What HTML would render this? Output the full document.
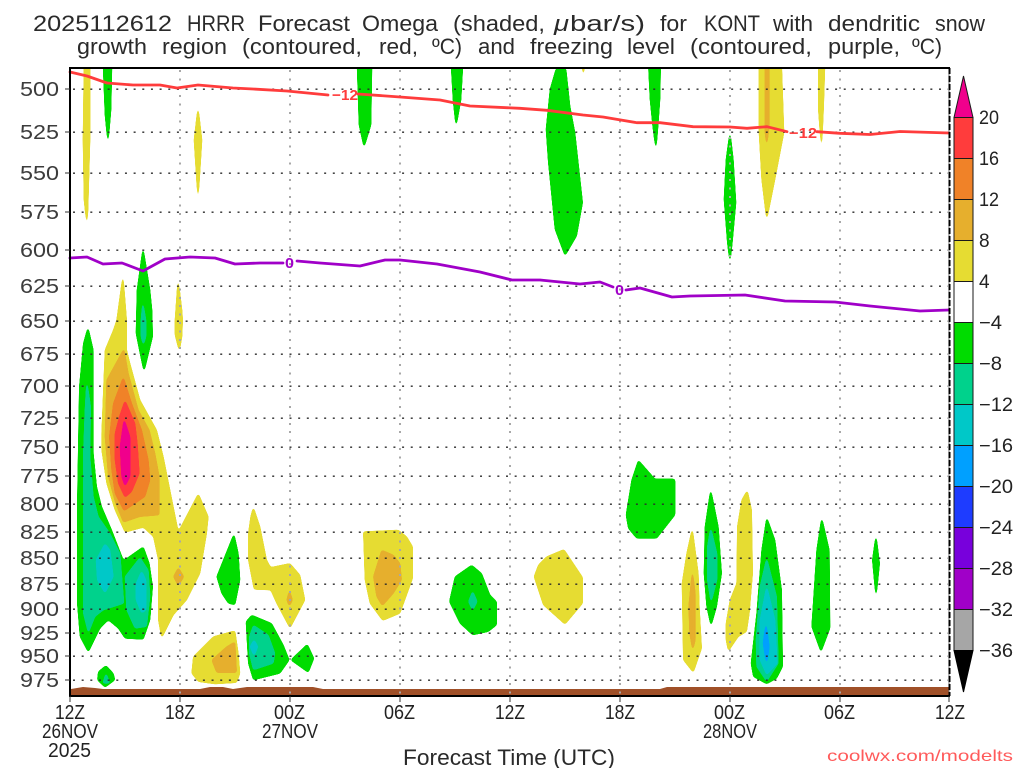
<!DOCTYPE html>
<html><head><meta charset="utf-8"><title>HRRR Forecast Omega</title>
<style>
html,body{margin:0;padding:0;background:#fff;width:1024px;height:768px;overflow:hidden}
svg{display:block}
text{font-family:"Liberation Sans",sans-serif;fill:#2a2a2a}
.t{font-size:22px}
.a{font-size:20px;fill:#3c3c3c}
.c{font-size:19px;fill:#222}
.x{font-size:20px;fill:#222}
.s1 polygon{filter:url(#s1)}
.s3 polygon{filter:url(#s3)}
.y{fill:#e6dc32}.o{fill:#e6af2d}.n{fill:#f08228}.r{fill:#ff3c3c}.m{fill:#f0008c}.g{fill:#00dc00}.e{fill:#00d28c}.q{fill:#00c8c8}.b{fill:#00a0ff}
</style></head><body>
<svg width="1024" height="768" viewBox="0 0 1024 768" xmlns="http://www.w3.org/2000/svg">
<defs>
<filter id="s1" x="-60%" y="-30%" width="220%" height="160%" color-interpolation-filters="sRGB">
<feGaussianBlur stdDeviation="1.2"/>
<feComponentTransfer><feFuncA type="linear" slope="14" intercept="-5"/></feComponentTransfer>
</filter>
<filter id="s3" x="-60%" y="-30%" width="220%" height="160%" color-interpolation-filters="sRGB">
<feGaussianBlur stdDeviation="3.6"/>
<feComponentTransfer><feFuncA type="linear" slope="14" intercept="-5"/></feComponentTransfer>
</filter>
</defs>
<rect width="1024" height="768" fill="#fff"/>

<!-- title -->
<g>
<text x="33" y="31" textLength="139" lengthAdjust="spacingAndGlyphs" class="t">2025112612</text>
<text x="187" y="31" textLength="58" lengthAdjust="spacingAndGlyphs" class="t">HRRR</text>
<text x="258" y="31" textLength="92" lengthAdjust="spacingAndGlyphs" class="t">Forecast</text>
<text x="362" y="31" textLength="76" lengthAdjust="spacingAndGlyphs" class="t">Omega</text>
<text x="453" y="31" textLength="92" lengthAdjust="spacingAndGlyphs" class="t">(shaded,</text>
<text x="554" y="31" textLength="15" lengthAdjust="spacingAndGlyphs" class="t" font-style="italic">μ</text>
<text x="570" y="31" textLength="75" lengthAdjust="spacingAndGlyphs" class="t">bar/s)</text>
<text x="660" y="31" textLength="27" lengthAdjust="spacingAndGlyphs" class="t">for</text>
<text x="704" y="31" textLength="56" lengthAdjust="spacingAndGlyphs" class="t">KONT</text>
<text x="773" y="31" textLength="40" lengthAdjust="spacingAndGlyphs" class="t">with</text>
<text x="828" y="31" textLength="92" lengthAdjust="spacingAndGlyphs" class="t">dendritic</text>
<text x="935" y="31" textLength="50" lengthAdjust="spacingAndGlyphs" class="t">snow</text>
<text x="77" y="54" textLength="70" lengthAdjust="spacingAndGlyphs" class="t">growth</text>
<text x="162" y="54" textLength="65" lengthAdjust="spacingAndGlyphs" class="t">region</text>
<text x="242" y="54" textLength="120" lengthAdjust="spacingAndGlyphs" class="t">(contoured,</text>
<text x="379" y="54" textLength="39" lengthAdjust="spacingAndGlyphs" class="t">red,</text>
<text x="432" y="54" textLength="30" lengthAdjust="spacingAndGlyphs" class="t">ºC)</text>
<text x="478" y="54" textLength="37" lengthAdjust="spacingAndGlyphs" class="t">and</text>
<text x="530" y="54" textLength="83" lengthAdjust="spacingAndGlyphs" class="t">freezing</text>
<text x="627" y="54" textLength="48" lengthAdjust="spacingAndGlyphs" class="t">level</text>
<text x="690" y="54" textLength="122" lengthAdjust="spacingAndGlyphs" class="t">(contoured,</text>
<text x="828" y="54" textLength="72" lengthAdjust="spacingAndGlyphs" class="t">purple,</text>
<text x="912" y="54" textLength="30" lengthAdjust="spacingAndGlyphs" class="t">ºC)</text>
</g>

<!-- shaded fields -->
<g>
<g class="s3" transform="translate(60,320) scale(.33333)">
<polygon class="g" points="84,20 100,90 100,400 110,500 125,560 155,630 190,720 200,715 250,680 268,730 278,800 270,900 250,958 195,955 175,925 145,900 120,925 85,997 60,950 52,850 52,550 58,200 70,70"/>
<polygon class="e" points="80,175 92,260 90,410 100,530 115,590 150,640 180,700 192,850 130,870 105,890 85,940 70,880 70,400 75,270"/>
<polygon class="e" points="240,712 265,750 270,830 260,920 225,925 200,870 195,770"/>
<polygon class="q" points="135,670 150,690 160,770 135,820 112,780 108,720"/>
<polygon class="q" points="245,752 258,780 258,870 245,880 228,840 228,790"/>
<polygon class="y" points="189,-140 200,0 200,90 210,130 240,240 265,285 290,330 310,410 330,510 355,635 415,520 445,590 440,640 420,760 380,840 340,885 305,955 295,900 295,720 280,650 250,622 195,637 165,570 140,490 125,390 125,340 135,90 160,30 170,0"/>
<polygon class="o" points="192,85 205,160 235,270 268,330 285,400 298,470 298,585 240,590 190,607 165,545 145,470 135,350 140,180"/>
<polygon class="n" points="190,170 215,250 245,330 265,420 270,480 255,530 192,573 165,520 155,450 148,350 160,250"/>
<polygon class="r" points="195,240 225,310 232,370 238,460 215,515 195,533 175,490 165,420 165,340 178,290"/>
<polygon class="m" points="192,295 210,350 210,470 195,500 185,470 180,380"/>
<polygon class="o" points="355,742 372,770 355,798 340,770"/>
<polygon class="g" points="249,-220 270,-90 276,-30 278,50 252,157 240,100 228,40 231,-90"/>
<polygon class="e" points="248,-60 258,0 258,50 250,78 243,50 243,0"/>
<polygon class="y" points="354,-130 366,-30 368,0 366,50 358,96 345,45 345,0"/>
<polygon class="g" points="522,640 535,700 540,780 525,855 505,850 485,820 470,770 490,720"/>
<polygon class="y" points="580,560 600,620 620,720 632,742 690,730 720,765 735,840 690,925 650,850 632,810 582,808 565,720 565,640 572,590"/>
<polygon class="o" points="688,810 698,840 688,860 680,840"/>
<polygon class="y" points="525,932 535,1000 540,1060 530,1088 465,1092 415,1085 395,1060 400,1010 460,950"/>
<polygon class="o" points="525,965 530,1058 470,1058 455,1020 500,980"/>
<polygon class="g" points="575,885 635,910 670,975 688,1020 660,1060 580,1080 565,1030 558,905"/>
<polygon class="e" points="580,915 625,945 645,1000 640,1030 580,1050 568,1000 568,950"/>
<polygon class="q" points="582,958 594,980 582,1009 570,980"/>
<polygon class="g" points="742,972 762,1015 745,1058 692,1020"/>
<polygon class="g" points="138,1036 160,1060 165,1080 135,1102 112,1080 115,1055"/>
<polygon class="e" points="138,1058 150,1090 128,1090"/>
</g>
<g class="s3" transform="translate(350,500) scale(.33333)">
<polygon class="y" points="40,95 145,90 170,110 188,140 188,235 150,340 98,362 60,310 45,240"/>
<polygon class="o" points="95,150 130,165 150,190 155,240 130,280 97,318 80,290 70,230"/>
<polygon class="g" points="365,195 395,220 420,285 440,305 440,375 415,395 368,405 330,370 298,305 315,230"/>
<polygon class="e" points="368,272 382,305 368,332 355,305"/>
<polygon class="y" points="642,148 698,232 698,310 645,373 580,315 552,230 565,195 590,170"/>
</g>
<g class="s3" transform="translate(620,440) scale(.33333)">
<polygon class="g" points="55,60 105,117 165,117 165,225 110,295 50,295 25,265 18,225 35,120"/>
<polygon class="y" points="217,262 235,400 238,500 245,625 220,698 190,660 186,430 200,340"/>
<polygon class="o" points="217,385 226,460 226,600 218,634 209,580 206,500"/>
<polygon class="g" points="272,145 295,260 305,400 290,500 273,560 260,500 252,400 255,260"/>
<polygon class="e" points="272,260 291,340 291,420 273,490 262,420 262,320"/>
<polygon class="y" points="382,150 395,210 398,400 388,520 380,575 355,590 325,634 318,600 318,550 330,480 350,430 352,260 365,180"/>
<polygon class="g" points="440,230 465,300 485,450 488,680 470,715 440,732 400,710 393,670 410,520 425,330"/>
<polygon class="e" points="440,352 470,470 475,670 440,725 410,680 408,600 420,440"/>
<polygon class="q" points="440,436 465,540 472,670 440,705 420,660 420,540"/>
<polygon class="b" points="438,544 448,620 440,676 429,610"/>
<polygon class="g" points="605,230 628,330 630,565 603,637 575,560 590,330"/>
<polygon class="g" points="768,280 779,370 768,480 757,360"/>
</g>
<g class="s3" transform="translate(520,66) scale(.33333)">
<polygon class="g" points="108,8 138,8 150,120 165,200 188,410 170,510 135,570 105,490 85,290 78,190 90,70"/>
<polygon class="y" points="185,-4 195,-4 190,34"/>
<polygon class="g" points="385,-4 422,-4 420,100 415,170 408,258 398,180 390,100"/>
<polygon class="g" points="630,192 640,280 648,410 638,520 630,596 622,530 612,400 618,280"/>
<polygon class="y" points="717,-4 785,-4 792,200 765,340 740,465 725,340 717,200"/>
<polygon class="o" points="735,-4 748,-4 748,180 740,246 735,200"/>
<polygon class="y" points="895,-4 915,-4 911,120 905,260 900,200 895,130"/>
</g>
<g class="s1">
<polygon class="g" points="357,64 372,64 371,125 364,148 359,125"/>
<polygon class="g" points="451,64 463,64 461,100 456,128 453,100"/>
<polygon class="y" points="84,64 90,64 90,140 88,210 87,228 84,200 83,140"/>
<polygon class="g" points="103,64 112,64 111,110 108,146 105,115"/>
<polygon class="y" points="198,105 202,140 198,204 194,140"/>
</g>
<rect x="71" y="60" width="880" height="8" fill="#fff"/>
<!-- terrain -->
<polygon fill="#a05028" points="71,695 71,689 83,687 95,688 103,689 200,689 210,687 223,687 233,689 247,687 313,687 323,689 660,689 667,687 949,687 949,695"/>
</g>

<!-- grid -->
<g fill="none" stroke="#2a2a2a" stroke-width="1.4" stroke-dasharray="2 6.66" stroke-dashoffset="-1" transform="translate(0,.2)">
<path d="M72 89H948M72 132H948M72 173H948M72 212H948M72 250H948M72 286H948M72 321H948M72 354H948M72 386H948M72 418H948M72 447H948M72 476H948M72 504H948M72 532H948M72 558H948M72 584H948M72 609H948M72 633H948M72 656H948M72 680H948"/>
</g>
<g fill="none" stroke="#a8a8a8" stroke-width="1.6" stroke-dasharray="2 6.4" shape-rendering="crispEdges">
<path d="M180 70V695M290 70V695M400 70V695M510 70V695M620 70V695M730 70V695M840 70V695"/>
</g>

<!-- contour lines -->
<g fill="none" stroke-width="2.8" stroke-linejoin="round" stroke-linecap="round">
<path stroke="#ff3c3c" d="M70 72L87 76L107 83L133 85L160 85L177 88L198 85L233 88L253 89L287 91L328 95"/>
<path stroke="#ff3c3c" d="M358 94L400 97L440 100L470 106L520 108.3L547 110.3L583 115L603 117L637 122.7L660 122.7L693 126.7L730 127L747 128.3L767 126.7L787 131.7"/>
<path stroke="#ff3c3c" d="M817 131.7L840 133.3L870 134.5L900 131.5L949 133"/>
<path stroke="#a000c8" d="M70 258L87 257L103 264L122 263L143 271L165 259L190 257L215 258L235 264L260 263L283 263"/>
<path stroke="#a000c8" d="M297 261L320 263L360 266L385 260L400 260L437 264L480 272L512 280L540 280L580 284L600 282L613 287"/>
<path stroke="#a000c8" d="M626 290L640 288L672 297L690 296L745 295L785 301L835 302L870 306L920 311L949 310"/>
</g>
<text x="332" y="100" font-size="15" font-weight="bold" textLength="26" lengthAdjust="spacingAndGlyphs" style="fill:#ff3c3c">−12</text>
<text x="789" y="138" font-size="15" font-weight="bold" textLength="28" lengthAdjust="spacingAndGlyphs" style="fill:#ff3c3c">−12</text>
<text x="285" y="268" font-size="15" font-weight="bold" textLength="9" lengthAdjust="spacingAndGlyphs" style="fill:#a000c8">0</text>
<text x="615" y="295" font-size="15" font-weight="bold" textLength="9" lengthAdjust="spacingAndGlyphs" style="fill:#a000c8">0</text>

<!-- frame -->
<g fill="none" stroke="#000" shape-rendering="crispEdges">
<path stroke-width="2" d="M70 68H950M70 696H950"/>
<path stroke-width="2" d="M70 67V697"/>
<path stroke-width="1" stroke="#666" d="M949 68V696"/>
<path stroke-width="2" stroke-dasharray="6 2" d="M949.5 68V696"/>
<path stroke="#333" stroke-width="1" d="M65 89H70M65 132H70M65 173H70M65 212H70M65 250H70M65 286H70M65 321H70M65 354H70M65 386H70M65 418H70M65 447H70M65 476H70M65 504H70M65 532H70M65 558H70M65 584H70M65 609H70M65 633H70M65 656H70M65 680H70"/>
<path stroke="#333" stroke-width="1" d="M70 696V702M180 696V702M290 696V702M400 696V702M510 696V702M620 696V702M730 696V702M840 696V702M949 696V702"/>
</g>

<!-- y labels -->
<g>
<text class="a" x="20" y="96" textLength="39" lengthAdjust="spacingAndGlyphs">500</text>
<text class="a" x="20" y="139" textLength="39" lengthAdjust="spacingAndGlyphs">525</text>
<text class="a" x="20" y="180" textLength="39" lengthAdjust="spacingAndGlyphs">550</text>
<text class="a" x="20" y="219" textLength="39" lengthAdjust="spacingAndGlyphs">575</text>
<text class="a" x="20" y="257" textLength="39" lengthAdjust="spacingAndGlyphs">600</text>
<text class="a" x="20" y="293" textLength="39" lengthAdjust="spacingAndGlyphs">625</text>
<text class="a" x="20" y="328" textLength="39" lengthAdjust="spacingAndGlyphs">650</text>
<text class="a" x="20" y="361" textLength="39" lengthAdjust="spacingAndGlyphs">675</text>
<text class="a" x="20" y="393" textLength="39" lengthAdjust="spacingAndGlyphs">700</text>
<text class="a" x="20" y="425" textLength="39" lengthAdjust="spacingAndGlyphs">725</text>
<text class="a" x="20" y="454" textLength="39" lengthAdjust="spacingAndGlyphs">750</text>
<text class="a" x="20" y="483" textLength="39" lengthAdjust="spacingAndGlyphs">775</text>
<text class="a" x="20" y="511" textLength="39" lengthAdjust="spacingAndGlyphs">800</text>
<text class="a" x="20" y="539" textLength="39" lengthAdjust="spacingAndGlyphs">825</text>
<text class="a" x="20" y="565" textLength="39" lengthAdjust="spacingAndGlyphs">850</text>
<text class="a" x="20" y="591" textLength="39" lengthAdjust="spacingAndGlyphs">875</text>
<text class="a" x="20" y="616" textLength="39" lengthAdjust="spacingAndGlyphs">900</text>
<text class="a" x="20" y="640" textLength="39" lengthAdjust="spacingAndGlyphs">925</text>
<text class="a" x="20" y="663" textLength="39" lengthAdjust="spacingAndGlyphs">950</text>
<text class="a" x="20" y="687" textLength="39" lengthAdjust="spacingAndGlyphs">975</text>
</g>

<!-- x labels -->
<text class="x" x="55" y="719" textLength="30" lengthAdjust="spacingAndGlyphs">12Z</text>
<text class="x" x="42" y="738" textLength="56" lengthAdjust="spacingAndGlyphs">26NOV</text>
<text class="x" x="48" y="757" textLength="43" lengthAdjust="spacingAndGlyphs">2025</text>
<text class="x" x="165" y="719" textLength="30" lengthAdjust="spacingAndGlyphs">18Z</text>
<text class="x" x="274" y="719" textLength="31" lengthAdjust="spacingAndGlyphs">00Z</text>
<text class="x" x="262" y="738" textLength="56" lengthAdjust="spacingAndGlyphs">27NOV</text>
<text class="x" x="384" y="719" textLength="31" lengthAdjust="spacingAndGlyphs">06Z</text>
<text class="x" x="495" y="719" textLength="30" lengthAdjust="spacingAndGlyphs">12Z</text>
<text class="x" x="605" y="719" textLength="30" lengthAdjust="spacingAndGlyphs">18Z</text>
<text class="x" x="714" y="719" textLength="31" lengthAdjust="spacingAndGlyphs">00Z</text>
<text class="x" x="703" y="738" textLength="54" lengthAdjust="spacingAndGlyphs">28NOV</text>
<text class="x" x="824" y="719" textLength="31" lengthAdjust="spacingAndGlyphs">06Z</text>
<text class="x" x="935" y="719" textLength="30" lengthAdjust="spacingAndGlyphs">12Z</text>
<text x="403" y="765" font-size="22" textLength="212" lengthAdjust="spacingAndGlyphs">Forecast Time (UTC)</text>
<text x="827" y="761" font-size="16" textLength="186" lengthAdjust="spacingAndGlyphs" style="fill:#ff5a5a">coolwx.com/modelts</text>

<!-- colorbar -->
<g stroke="#1a1a1a" stroke-width="1" shape-rendering="crispEdges">
<rect x="954" y="117.5" width="19" height="41" fill="#ff3c3c"/>
<rect x="954" y="158.5" width="19" height="41" fill="#f08228"/>
<rect x="954" y="199.5" width="19" height="41" fill="#e6af2d"/>
<rect x="954" y="240.5" width="19" height="41" fill="#e6dc32"/>
<rect x="954" y="281.5" width="19" height="41" fill="#fff"/>
<rect x="954" y="322.5" width="19" height="41" fill="#00dc00"/>
<rect x="954" y="363.5" width="19" height="41" fill="#00d28c"/>
<rect x="954" y="404.5" width="19" height="41" fill="#00c8c8"/>
<rect x="954" y="445.5" width="19" height="41" fill="#00a0ff"/>
<rect x="954" y="486.5" width="19" height="41" fill="#1e3cff"/>
<rect x="954" y="527.5" width="19" height="41" fill="#7800dc"/>
<rect x="954" y="568.5" width="19" height="41" fill="#a000c8"/>
<rect x="954" y="609.5" width="19" height="41" fill="#a6a6a6"/>
</g>
<polygon points="954,117.5 973,117.5 963.5,76" fill="#f0008c" stroke="#1a1a1a" stroke-width="1"/>
<polygon points="954,650.5 973,650.5 963.5,692" fill="#000" stroke="#000" stroke-width="1"/>
<text class="c" x="979" y="124" textLength="20" lengthAdjust="spacingAndGlyphs">20</text>
<text class="c" x="979" y="165" textLength="20" lengthAdjust="spacingAndGlyphs">16</text>
<text class="c" x="979" y="206" textLength="20" lengthAdjust="spacingAndGlyphs">12</text>
<text class="c" x="979" y="247">8</text>
<text class="c" x="979" y="288">4</text>
<text class="c" x="979" y="329" textLength="23" lengthAdjust="spacingAndGlyphs">−4</text>
<text class="c" x="979" y="370" textLength="23" lengthAdjust="spacingAndGlyphs">−8</text>
<text class="c" x="979" y="411" textLength="34" lengthAdjust="spacingAndGlyphs">−12</text>
<text class="c" x="979" y="452" textLength="34" lengthAdjust="spacingAndGlyphs">−16</text>
<text class="c" x="979" y="493" textLength="34" lengthAdjust="spacingAndGlyphs">−20</text>
<text class="c" x="979" y="534" textLength="34" lengthAdjust="spacingAndGlyphs">−24</text>
<text class="c" x="979" y="575" textLength="34" lengthAdjust="spacingAndGlyphs">−28</text>
<text class="c" x="979" y="616" textLength="34" lengthAdjust="spacingAndGlyphs">−32</text>
<text class="c" x="979" y="657" textLength="34" lengthAdjust="spacingAndGlyphs">−36</text>
</svg>
</body></html>
